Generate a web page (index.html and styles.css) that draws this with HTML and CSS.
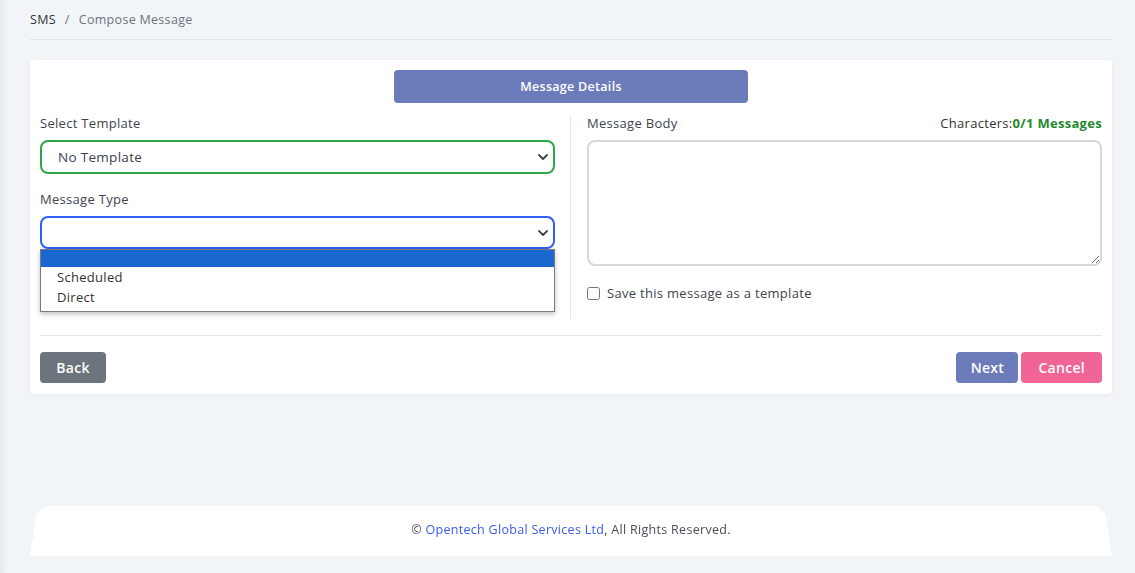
FILE: index.html
```html
<!DOCTYPE html>
<html lang="en">
<head>
<meta charset="utf-8">
<title>Compose Message</title>
<link rel="stylesheet" href="styles.css">
</head>
<body>
<div class="page">
  <div class="content">
    <nav class="breadcrumb">
      <span class="crumb">SMS</span>
      <span class="sep">/</span>
      <span class="crumb current">Compose Message</span>
    </nav>

    <section class="card">
      <div class="card-head">
        <button class="btn btn-primary tab-btn" type="button">Message Details</button>
      </div>

      <div class="form-row">
        <div class="col col-left">
          <label class="label">Select Template</label>
          <div class="select-wrap">
            <div class="select select-green">No Template</div>
            <svg class="chev" viewBox="0 0 10 6" width="10" height="6"><path d="M1 1l4 4 4-4" fill="none" stroke="#444" stroke-width="1.8" stroke-linecap="round" stroke-linejoin="round"/></svg>
          </div>

          <label class="label label-gap">Message Type</label>
          <div class="select-wrap">
            <div class="select select-blue"></div>
            <svg class="chev" viewBox="0 0 10 6" width="10" height="6"><path d="M1 1l4 4 4-4" fill="none" stroke="#444" stroke-width="1.8" stroke-linecap="round" stroke-linejoin="round"/></svg>
            <ul class="dropdown">
              <li class="opt active">&nbsp;</li>
              <li class="opt">Scheduled</li>
              <li class="opt">Direct</li>
            </ul>
          </div>
        </div>

        <div class="col col-right">
          <div class="label-row">
            <label class="label">Message Body</label>
            <span class="counter">Characters:<b>0/1 Messages</b></span>
          </div>
          <textarea class="textarea"></textarea>
          <label class="check">
            <input type="checkbox">
            <span>Save this message as a template</span>
          </label>
        </div>
      </div>

      <hr class="divider">

      <div class="actions">
        <button class="btn btn-secondary btn-back" type="button">Back</button>
        <div class="actions-right">
          <button class="btn btn-primary btn-next" type="button">Next</button>
          <button class="btn btn-pink" type="button">Cancel</button>
        </div>
      </div>
    </section>
  </div>

  <footer class="footer">
    <p>&copy; <a href="#">Opentech Global Services Ltd</a>, All Rights Reserved.</p>
  </footer>
</div>
</body>
</html>
```

FILE: styles.css
```css
* { box-sizing: border-box; }

html, body {
  margin: 0;
  padding: 0;
}

body {
  font-family: "Open Sans", "Noto Sans", sans-serif;
  font-size: 13px;
  letter-spacing: 0.3px;
  color: #3d4450;
  background: #f2f5f8;
}

.page {
  min-height: 100vh;
  display: flex;
  flex-direction: column;
  padding: 0 23px 17px 30px;
  background: linear-gradient(to right, #e6e9ed 0, #f2f5f8 8px);
}

.breadcrumb {
  display: flex;
  align-items: center;
  height: 40px;
  border-bottom: 1px solid #e1e5ea;
  font-size: 12.5px;
  padding-bottom: 1px;
}

.crumb { color: #2f3640; }
.crumb.current { color: #6c737c; }
.sep { color: #6c737c; margin: 0 9px; }

.card {
  margin-top: 20px;
  background: #fff;
  border-radius: 4px;
  box-shadow: 0 1px 4px rgba(30, 40, 60, 0.06);
  padding: 10px 10px 11px;
}

.card-head {
  display: flex;
  justify-content: center;
}

.btn {
  font-family: "Open Sans", "Noto Sans", sans-serif;
  letter-spacing: 0.3px;
  border: 0;
  border-radius: 4px;
  color: #fff;
  font-weight: 600;
  font-size: 14px;
  height: 31px;
  padding: 0 16px;
  cursor: pointer;
}

.tab-btn {
  width: 354px;
  height: 33px;
  font-size: 12.5px;
}

.btn-primary { background: #6c7bb9; }
.btn-secondary { background: #6c757d; }
.btn-pink { background: #f06595; padding: 0 17px; }
.btn-back { width: 66px; padding: 0; }
.btn-next { width: 62px; padding: 0; }

.form-row {
  display: grid;
  grid-template-columns: 1fr 1fr;
  margin-top: 12px;
}

.col-left {
  padding-right: 15px;
  border-right: 1px solid #e4e7eb;
}

.col-right {
  padding-left: 16px;
  padding-bottom: 17px;
}

.label {
  display: block;
  line-height: 16px;
  margin-bottom: 9px;
  color: #3d4450;
}

.label-gap { margin-top: 17px; }

.select-wrap { position: relative; }

.select {
  height: 34px;
  border-radius: 8px;
  border: 2px solid #2ea846;
  padding: 0 16px;
  display: flex;
  align-items: center;
  font-size: 13.5px;
  color: #3a4252;
}

.select-blue {
  border-color: #2f5ff5;
  height: 33px;
}

.chev {
  position: absolute;
  right: 7px;
  top: 14px;
}

.dropdown {
  position: absolute;
  left: 0;
  right: 0;
  top: 33px;
  margin: 0;
  padding: 0 0 4px;
  list-style: none;
  background: #fff;
  border: 1px solid #7a7a7a;
  box-shadow: 0 2px 5px rgba(0, 0, 0, 0.25);
  z-index: 5;
}

.opt {
  height: 20px;
  line-height: 20px;
  padding-left: 16px;
  font-size: 13px;
  color: #333;
}

.opt.active {
  background: #1b67d2;
  height: 17px;
}

.label-row {
  display: flex;
  justify-content: space-between;
  align-items: baseline;
}

.counter { color: #333; line-height: 16px; }
.counter b { color: #1f8a2e; font-weight: 700; }

.textarea {
  display: block;
  width: 100%;
  height: 126px;
  border: 2px solid #d5d8dc;
  border-radius: 8px;
  resize: vertical;
  font-family: inherit;
}

.check {
  display: flex;
  align-items: center;
  margin-top: 18px;
  color: #3d4450;
}

.check input {
  margin: 0 7px 0 0;
  width: 13px;
  height: 13px;
}

.divider {
  border: 0;
  border-top: 1px solid #e4e7eb;
  margin: 16px 0 16px;
}

.actions {
  display: flex;
  justify-content: space-between;
}

.actions-right {
  display: flex;
  gap: 3px;
}

.footer {
  margin-top: auto;
  position: relative;
  height: 53px;
  display: flex;
  align-items: center;
  justify-content: center;
}

.footer::before {
  content: "";
  position: absolute;
  inset: 0;
  background: #fff;
  border-radius: 14px 14px 0 0;
  transform: perspective(1000px) rotateX(16deg);
  transform-origin: bottom center;
}

.footer p {
  position: relative;
  margin: 0;
  font-size: 12.5px;
  color: #4a4f57;
}

.footer a {
  color: #3c5bf0;
  text-decoration: none;
}
```
